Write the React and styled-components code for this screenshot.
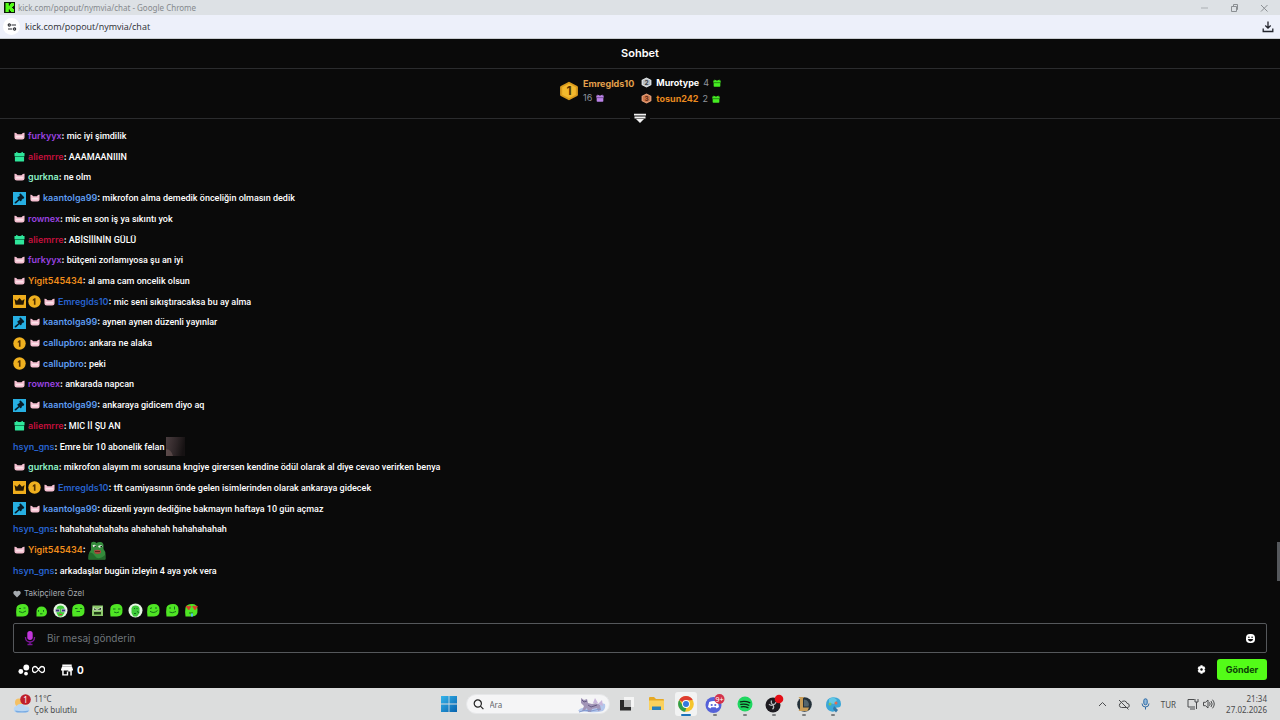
import React from "react";
import styled, { createGlobalStyle } from "styled-components";

const GlobalStyle = createGlobalStyle`
  *, *::before, *::after { box-sizing: border-box; }
  body { margin: 0; background: #0a0a0a; }
  button, input { font: inherit; color: inherit; }
  svg { display: block; flex: none; }
`;

const Page = styled.div`
  display: flex;
  flex-direction: column;
  min-height: 100vh;
  background: #0a0a0a;
  color: #fff;
  font-family: Inter, "Liberation Sans", sans-serif;
`;

const PlainButton = styled.button`
  display: flex;
  align-items: center;
  justify-content: center;
  gap: 2px;
  padding: 0;
  border: 0;
  background: none;
`;

/* ---------- browser window frame ---------- */

const TitleBar = styled.header`
  display: flex;
  align-items: center;
  height: 15px;
  padding: 0 10px 0 4px;
  gap: 3px;
  background: #dde1e5;
  color: #85898d;
  font: 8px/15px "Noto Sans", "Open Sans", sans-serif;
`;

const WindowControls = styled.div`
  display: flex;
  gap: 20px;
  margin-left: auto;
  color: #8b8f93;
`;

const AddressBar = styled.div`
  display: flex;
  align-items: center;
  justify-content: space-between;
  height: 24px;
  padding: 0 6px 0 3px;
  border-bottom: 1px solid #c9cdd0;
  background: #edf0fa;
  color: #2c2e33;
`;

const Address = styled.div`
  display: flex;
  align-items: center;
  gap: 5px;
  font: 9px/20px "Open Sans", "Noto Sans", sans-serif;
`;

const SiteInfo = styled(PlainButton)`
  width: 17px;
  height: 17px;
  border-radius: 50%;
  background: #fff;
`;

/* ---------- chat header and leaderboard ---------- */

const ChatTitle = styled.h1`
  margin: 0;
  height: 30px;
  border-bottom: 1px solid #2b2c2e;
  font-size: 11px;
  line-height: 29px;
  font-weight: 600;
  text-align: center;
`;

const Leaderboard = styled.section`
  display: flex;
  align-items: center;
  justify-content: center;
  gap: 7px;
  height: 43px;
  font-size: 9px;
`;

const Leader = styled.div`
  display: flex;
  align-items: center;
  gap: 4px;
`;

const RunnersUp = styled.div`
  display: flex;
  flex-direction: column;
  gap: 2px;
`;

const LeaderName = styled.div`
  color: ${(p) => p.$color};
  font-weight: 700;
  line-height: 14px;
`;

const GiftCount = styled.div`
  display: flex;
  align-items: center;
  gap: 4px;
  color: #8f959e;
  line-height: 13px;
`;

const Divider = styled.div`
  display: flex;
  align-items: center;
  gap: 4px;
  height: 12px;
  &::before, &::after {
    content: "";
    flex: 1;
    height: 1px;
    background: #2b2c2e;
  }
`;

/* ---------- messages ---------- */

const ChatArea = styled.main`
  position: relative;
  display: flex;
  flex: 1;
`;

const Messages = styled.ol`
  display: flex;
  flex: 1;
  flex-direction: column;
  justify-content: space-between;
  margin: 0;
  padding: 2px 13px 0;
  list-style: none;
`;

const Message = styled.li`
  display: flex;
  align-items: center;
  gap: 2px;
  height: 20px;
  font: 500 9px/20px Roboto, Inter, sans-serif;
`;

const Badge = styled.span`
  display: flex;
  align-items: center;
  justify-content: center;
  width: 13px;
  height: 13px;
`;

const Author = styled.span`
  color: ${(p) => p.$color};
  font-family: Inter, Roboto, sans-serif;
  font-weight: 600;
`;

const Thumb = styled.div`
  position: absolute;
  right: 0;
  bottom: 0;
  width: 3px;
  height: 39px;
  background: #55585c;
`;

/* ---------- composer ---------- */

const Composer = styled.footer`
  padding: 6px 13px 8px;
`;

const Restriction = styled.div`
  display: flex;
  align-items: center;
  gap: 3px;
  color: #a6abb0;
  font-size: 8px;
  line-height: 13px;
`;

const Emotes = styled.div`
  display: flex;
  justify-content: space-between;
  max-width: 184px;
  margin: 2px 0 5px 2px;
`;

const EmoteButton = styled(PlainButton)`
  width: 15px;
  height: 16px;
`;

const MessageBox = styled.div`
  display: flex;
  align-items: center;
  height: 30px;
  padding: 0 11px 0 10px;
  gap: 11px;
  border: 1px solid #55585b;
  border-radius: 2px;
`;

const MessageInput = styled.input`
  flex: 1;
  min-width: 0;
  padding: 0;
  border: 0;
  outline: 0;
  background: none;
  font-size: 10px;
  line-height: 20px;
  &::placeholder { color: #70767b; opacity: 1; }
`;

const Actions = styled.div`
  display: flex;
  align-items: center;
  gap: 16px;
  margin-top: 6px;
  padding-left: 5px;
  font-size: 10px;
  font-weight: 700;
`;

const Points = styled.span`
  padding-left: 2px;
`;

const SendGroup = styled.div`
  display: flex;
  align-items: center;
  gap: 11px;
  margin-left: auto;
`;

const SendButton = styled.button`
  min-width: 50px;
  height: 21px;
  padding: 0 7px;
  border: 0;
  border-radius: 3px;
  background: #53fc18;
  color: #0b3f06;
  font-size: 9px;
  font-weight: 700;
  line-height: 21px;
`;

/* ---------- desktop taskbar ---------- */

const Taskbar = styled.nav`
  display: grid;
  grid-template-columns: 1fr auto 1fr;
  align-items: center;
  height: 32px;
  padding: 0 13px;
  background: #dcdddd;
  color: #4a4b4c;
  font: 8px/11px "Noto Sans", "Open Sans", sans-serif;
`;

const Weather = styled.div`
  display: flex;
  align-items: center;
  gap: 2px;
`;

const Launcher = styled.div`
  display: flex;
  align-items: center;
  gap: 9px;
  padding-left: 5px;
`;

const Search = styled.label`
  display: flex;
  align-items: center;
  width: 144px;
  height: 20px;
  padding: 0 2px 0 6px;
  gap: 6px;
  border: 1px solid #e6e7e9;
  border-radius: 10px;
  background: #f5f5f6;
`;

const SearchInput = styled.input`
  flex: 1;
  min-width: 0;
  padding: 0;
  border: 0;
  outline: 0;
  background: none;
  &::placeholder { color: #65676a; opacity: 1; }
`;

const Apps = styled.div`
  display: flex;
  justify-content: space-between;
  width: 229px;
  margin-left: -3px;
`;

const AppButton = styled(PlainButton)`
  position: relative;
  width: 22px;
  height: 24px;
  border-radius: 3px;
  background: ${(p) => (p.$active ? "#f2f3f3" : "none")};
  &::after {
    content: "";
    display: ${(p) => (p.$running ? "block" : "none")};
    position: absolute;
    bottom: 0;
    width: ${(p) => (p.$active ? "10px" : "4px")};
    height: 2px;
    border-radius: 1px;
    background: ${(p) => (p.$active ? "#1c73b9" : "#7d7e80")};
  }
`;

const Tray = styled.div`
  display: flex;
  align-items: center;
  justify-content: flex-end;
  gap: 11px;
`;

const TrayPair = styled.div`
  display: flex;
  align-items: center;
  gap: 4px;
`;

const Clock = styled.time`
  text-align: right;
`;

/* ---------- drawings ---------- */

const KickLogo = () => (
  <svg width="11" height="11" viewBox="0 0 11 11">
    <path d="M0 0h11v11H0z" fill="#0b1a08" />
    <path d="M1.500 1h3.300v2.500H6V2h1V1h3v3H9v1H8v1h1v1h1v3H7V9H6V7.500H4.800V10H1.500z" fill="#53fc18" />
  </svg>
);

const TuneIcon = () => (
  <svg width="10" height="10" viewBox="0 0 10 10" fill="none" stroke="#2b2d31" strokeWidth="1.100">
    <circle cx="2.300" cy="3" r="1.100" /><path d="M4.500 3H9M1 7h4.300" /><circle cx="7.600" cy="7" r="1.100" />
  </svg>
);

const DownloadIcon = () => (
  <svg width="12" height="12" viewBox="0 0 12 12" fill="none" stroke="#22242c" strokeWidth="1.300">
    <path d="M6 .5v6.500M3.300 4.500 6 7.200 8.700 4.500M1.200 7.500v3h9.600v-3" />
  </svg>
);

const Gift = ({ size = 11, color = "#2be86a", band = "#0c7a35" }) => (
  <svg width={size} height={size} viewBox="0 0 12 12">
    <path d="M2.300.8 5 2.300h2L9.700.8v1.400H11.500v3.500H.5V2.200h1.800z" fill={color} />
    <path d="M1 6h10v4.500q0 1-1 1H2q-1 0-1-1z" fill={color} />
    <path d="M1 5.500h10v.7H1z" fill={band} />
  </svg>
);

const Hexagon = ({ size, place, fill, edge, ink }) => (
  <svg width={size} height={size} viewBox="0 0 22 22">
    <path d="M11 .8 20 5.500q.8.4.8 1.300v8.400q0 .9-.8 1.300L11 21.200 2 16.500q-.8-.4-.8-1.300V6.800q0-.9.8-1.300z" fill={edge} />
    <path d="M11 3 18.500 7v8L11 19 3.500 15V7z" fill={fill} />
    <text x="11" y="15.500" textAnchor="middle" fontSize="13" fontWeight="700" fill={ink}>{place}</text>
  </svg>
);

const CollapseIcon = () => (
  <svg width="12" height="11" viewBox="0 0 12 11" fill="#f2f2f2">
    <path d="M0 .8h12v1.600H0zM.5 3.400h11v2H.5zM2 6h8L6 10z" />
  </svg>
);

const PinkBadge = ({ size = 11 }) => (
  <svg width={size} height="8" viewBox="0 0 12 9" preserveAspectRatio="none">
    <path d="M.5.8Q2.200.5 3.800 2.400h4.400Q9.800.5 11.500.8v5.400Q11.500 8.300 9 8.300H3Q.5 8.300.5 6.200z" fill="#f4bfd0" />
    <path d="M2 5.300h8" stroke="#fbe3ea" strokeWidth="1.800" />
  </svg>
);

const ModBadge = () => (
  <svg width="13" height="13" viewBox="0 0 13 13">
    <path d="M0 0h13v13H0z" fill="#27afe2" />
    <path d="m6.400 2 1.200-.5 3.600 3.700-.3 1.300-1.200.2-1 1-.3 1.300-1 .3L4.300 6.100l.4-1.200 1.200-.3.900-.9zM5.700 6.900l1 1-3.800 3.700-1.300-.3.1-1z" fill="#071b26" />
  </svg>
);

const CrownBadge = () => (
  <svg width="13" height="13" viewBox="0 0 13 13">
    <path d="M0 0h13v13H0z" fill="#efad1c" />
    <path d="m1.500 4 2.500 1.800L6.500 3 9 5.800 11.500 4l-1 5.800h-8z" fill="#241804" />
  </svg>
);

const CoinBadge = () => (
  <svg width="13" height="13" viewBox="0 0 13 13">
    <circle cx="6.500" cy="6.500" r="6.200" fill="#efb01f" />
    <path d="M4.800 4.600 6.300 3.300h1.200v6.400H5.900V5.300l-1.100.8z" fill="#553200" />
  </svg>
);

const badgeArt = {
  pink: <PinkBadge />,
  small: <PinkBadge size={10} />,
  gift: <Gift color="#2fe69b" band="#0e7d52" />,
  mod: <ModBadge />,
  crown: <CrownBadge />,
  coin: <CoinBadge />,
};

const FrogEmote = () => (
  <svg width="18" height="19" viewBox="0 0 18 19">
    <path d="M3 3Q3 .5 6 .8 8 1 8.500 2.200 10 .5 13 1q2.500.5 2.500 3.500V8q2 2 2 6v4.500H.5Q0 12 3 9z" fill="#348c3c" />
    <path d="M1 12q3-2 6 3t10-1v4.500H.5z" fill="#226b2b" />
    <path d="M4.500 4.500Q6.500 3 8.500 5L5.500 6.200zM10 5q3-1.500 5 .5L11 6.800z" fill="#eaf6e6" />
    <path d="M6.500 4.800h1.500v1H6.500zM12.500 4.900h1.700v1.200h-1.700z" fill="#111" />
    <path d="M6 9.500Q9 8 13 9.500v2.500Q9 14 6.500 12z" fill="#a3493b" />
    <path d="M7 10.500h5" stroke="#5d211c" />
  </svg>
);

const BlurredEmote = () => (
  <svg width="19" height="19" viewBox="0 0 19 19">
    <defs>
      <linearGradient id="dusk" x2="1" y2=".2">
        <stop stopColor="#4a3d3f" /><stop offset=".6" stopColor="#2e2527" /><stop offset="1" stopColor="#161213" />
      </linearGradient>
    </defs>
    <path d="M0 0h19v19H0z" fill="url(#dusk)" />
    <path d="M0 12q5 0 7 7H0z" fill="#735d5c" opacity=".5" />
  </svg>
);

const Blob = ({ kind }) => {
  const green = "#4fe524";
  const dark = "#14701a";
  const heads = {
    round: <path d="M1.500 4.500Q2.500 1 8 1q5.500 0 5.500 5.500Q14 13.500 8 13.500H1.500Q.7 9 1.500 4.500z" fill={green} />,
    small: <path d="M2.500 8Q3 3.500 7.500 3.500T13 8.500Q13 13.500 8 13.500H2.500z" fill={green} />,
    square: <path d="M2.500 2.500H13V13H2V8z" fill="#8cc96a" />,
    white: <><circle cx="7.500" cy="7.500" r="7" fill="#e6f5e3" /><path d="M3.500 5.500q.5-3 4-3t4 3V10L9 13.500H5.500L3.500 10z" fill="#3fcb3a" /></>,
  };
  const faces = {
    smile: <path d="M4 5.500h2M8.500 5h2M4 8.500q3.500 2.500 7-.5" />,
    dots: <path d="M4.500 7v1.800M9.500 7v1.800M6 10.800h2.500" />,
    shades: <><path d="M2.500 6.200h4v2.600h-4zM8.500 6.200h4v2.600h-4z" fill="#3a3478" stroke="#dfd3ea" strokeWidth=".6" /><path d="M6 11.500h3" stroke="#d5333c" /></>,
    flat: <path d="M4 5.500h2.500M9 5.500h2.200M5.500 8.500H9" />,
    grin: <><path d="M4 9h7v2.500H4z" fill="#1d3a14" stroke="none" /><path d="m3.500 4.500 3.500 2L11.500 4v3.200h-8z" fill="#1d3a14" stroke="#eef8ea" strokeWidth=".7" /></>,
    wink: <path d="M4 6h2.500M9 6h2.500M5 9q2.500 1.500 5 0" />,
    point: <path d="M6 5.500h1M8.500 5.500h1M9 8.500l2 1M6 10.500h2" />,
    calm: <path d="M4 5.500 6 4.800M9 5h2M4 8.300Q8 11 11.500 7.500" />,
    think: <path d="M5 4v2M9.500 3.500v3M4.500 9q3 1.500 5 0l1.500-.5" />,
    hearts: <><path d="M2 3.500q1.500-1 2.500 0 1.500-1 2.500 0L4.800 7zM8.500 3.500q1.500-1 2.500 0 1.500-1 2.500 0L11 7z" fill="#e1352f" stroke="#e1352f" strokeWidth=".6" /><path d="M5 10h4" /><path d="M8 10.500v3" stroke="#50bde8" strokeWidth="2" /></>,
  };
  const [head, face] = kind.split("-");
  return (
    <svg width="15" height="15" viewBox="0 0 15 15" fill="none" stroke={dark} strokeWidth="1">
      <g stroke="none">{heads[head]}</g>
      {faces[face]}
    </svg>
  );
};

const HeartIcon = () => (
  <svg width="8" height="8" viewBox="0 0 8 8" fill="#a6abb0"><path d="M4 7.500.8 4.200Q-.3 2.500 1 1.200 2.600 0 4 1.500 5.400 0 7 1.200 8.300 2.500 7.200 4.200z" /></svg>
);

const PurpleMic = () => (
  <svg width="12" height="16" viewBox="0 0 12 16">
    <rect x="3.300" y="1" width="5.400" height="9" rx="2.700" fill="#c236dc" />
    <path d="M1.500 7v.8Q1.800 12 6 12t4.500-4.200V7M6 12v2.500M3.500 14.500h5" fill="none" stroke="#7d179b" strokeWidth="1.300" />
  </svg>
);

const SmileIcon = () => (
  <svg width="9" height="9" viewBox="0 0 9 9">
    <rect width="9" height="9" rx="3.800" fill="#fff" />
    <circle cx="2.900" cy="3.300" r=".8" fill="#111" /><circle cx="6.100" cy="3.300" r=".8" fill="#111" />
    <path d="M1.800 5h5.400Q6.800 7.400 4.500 7.400T1.800 5z" fill="#111" />
  </svg>
);

const BubblesIcon = () => (
  <svg width="12" height="12" viewBox="0 0 12 12" fill="#fff"><circle cx="8.300" cy="3.500" r="2.900" /><circle cx="2.800" cy="7.500" r="2.400" /><circle cx="8" cy="9.600" r="1.900" /></svg>
);

const InfinityIcon = () => (
  <svg width="13" height="9" viewBox="0 0 13 9" fill="none" stroke="#fff" strokeWidth="1.300">
    <path d="M6.500 4.500C5 2.200 4.500 1.500 3.200 1.500a2.800 3 0 0 0 0 6C4.500 7.500 5 6.800 6.500 4.500S8.500 1.500 9.800 1.500a2.800 3 0 0 1 0 6C8.500 7.500 8 6.800 6.500 4.500z" />
  </svg>
);

const StoreIcon = () => (
  <svg width="12" height="12" viewBox="0 0 12 12" fill="#fff">
    <path d="M1.300.5h9.400v1.400H1.300zM1.200 2.300h9.600l1.200 3.200v1H0v-1zM1.200 6.500h1.500v3.800h3.100V7.500h1.400v4h-6zM8.800 6.500h2v5h-1.500V7.500h-2v-1z" />
  </svg>
);

const GearIcon = () => (
  <svg width="9" height="9" viewBox="0 0 9 9"><path d="M3.500.3h2l.3 1.200 1.300-.3 1.300 2-.8.800v1l.8.8-1.300 2-1.300-.3-.3 1.200h-2l-.3-1.200-1.300.3-1.300-2 .8-.8V4L.6 3.200l1.300-2 1.300.3z" fill="#fff" /><circle cx="4.500" cy="4.500" r="1.200" fill="#0a0a0a" /></svg>
);

const WeatherIcon = () => (
  <svg width="19" height="20" viewBox="0 0 19 20">
    <circle cx="6" cy="8.500" r="4" fill="#f4c064" />
    <path d="M3.500 18.500a3.300 3.300 0 0 1 0-6.500Q5 9.500 8 10q3-.5 4 2.200 4.500-.2 4.500 3.300 0 3-3.500 3z" fill="#b9d6f3" />
    <path d="M2 16.500q7 1.500 14 0-1 2-3.500 2h-8q-2 0-2.500-2z" fill="#79abe2" />
    <circle cx="12.500" cy="5.500" r="5.300" fill="#bf1e2c" />
    <text x="12.500" y="8.500" textAnchor="middle" fontSize="8" fill="#fff">1</text>
  </svg>
);

const WindowsIcon = () => (
  <svg width="16" height="16" viewBox="0 0 16 16">
    <defs><linearGradient id="win" x2="1" y2="1"><stop stopColor="#35b4ea" /><stop offset="1" stopColor="#0762ae" /></linearGradient></defs>
    <path d="M0 0h7.600v7.600H0zM8.400 0H16v7.600H8.400zM0 8.400h7.600V16H0zM8.400 8.400H16V16H8.400z" fill="url(#win)" />
  </svg>
);

const SearchIcon = () => (
  <svg width="11" height="11" viewBox="0 0 11 11" fill="none" stroke="#222" strokeWidth="1.200"><circle cx="4.800" cy="4.500" r="3.600" /><path d="m7.400 7.100 3 3" /></svg>
);

const SearchArt = () => (
  <svg width="30" height="17" viewBox="0 0 30 17">
    <path d="M1 15q3-4 8-3l7-2q7-4 12-2 1 4-2 7-6 2-15 1z" fill="#b4c7ec" />
    <path d="M4 2l3 2 3-1 1 4 4 1q5-2 8 1l1 5-3 1-1-3-5 1-1 3h-3l-1-4-3 3H5l2-5-3-3z" fill="#a295b7" />
    <path d="m5 4 2 2 3-1M11 9l3 2 6-2" fill="none" stroke="#655b83" />
    <path d="m16 7 2-5 3 5zM21 8l4-4 1 6z" fill="#c9b5db" />
    <path d="M2 16q6-3 12-1l9-2" fill="none" stroke="#8299cf" />
  </svg>
);

const TaskViewIcon = () => (
  <svg width="16" height="16" viewBox="0 0 16 16"><path d="M5 1h10v10H5z" fill="#f5f5f5" /><path d="M1 4h4v7h7v3.500H1z" fill="#29292a" /><path d="M5 4h7v7H5z" fill="#b9babb" /></svg>
);

const FolderIcon = () => (
  <svg width="17" height="16" viewBox="0 0 17 16"><path d="M1 2q0-1 1-1h4l2 2h7q1 0 1 1v9q0 1-1 1H2q-1 0-1-1z" fill="#e6a925" /><path d="M1 4.500h15V13q0 1-1 1H2q-1 0-1-1z" fill="#fad15e" /><path d="M4 10.500h9V14H4z" fill="#2a80bc" /></svg>
);

const ChromeIcon = () => (
  <svg width="16" height="16" viewBox="0 0 16 16">
    <circle cx="8" cy="8" r="7.800" fill="#f5c52b" />
    <path d="M8 8 1.200 4.100A7.800 7.800 0 0 1 14.800 4.100L8 4.500z" fill="#de3c30" />
    <path d="M1.200 4.100 5 10l3.300 1.800-1.200 4A7.800 7.800 0 0 1 1.200 4.100z" fill="#2d9e4c" />
    <circle cx="8" cy="8" r="3.900" fill="#fff" /><circle cx="8" cy="8" r="3" fill="#3379df" />
  </svg>
);

const DiscordIcon = () => (
  <svg width="20" height="20" viewBox="0 0 20 20">
    <circle cx="8.500" cy="11" r="8" fill="#5562d8" />
    <path d="M4.200 8Q8.500 6 12.800 8l1.200 5-2.400 1.500-1-1.200H6.400l-1 1.200L3 13z" fill="#fff" />
    <circle cx="6.700" cy="11" r="1.100" fill="#5562d8" /><circle cx="10.300" cy="11" r="1.100" fill="#5562d8" />
    <circle cx="14.500" cy="5" r="5" fill="#d4324a" />
    <text x="14.500" y="7.500" textAnchor="middle" fontSize="7" fill="#fff">9+</text>
  </svg>
);

const SpotifyIcon = () => (
  <svg width="16" height="16" viewBox="0 0 16 16"><circle cx="8" cy="8" r="7.500" fill="#1fd760" /><path d="M3.300 5.800q5-1.300 9.400.9M3.800 8.400q4.500-1 8 .9M4.300 10.800q3.500-.8 6.600.8" fill="none" stroke="#0c2414" strokeWidth="1.300" strokeLinecap="round" /></svg>
);

const ObsIcon = () => (
  <svg width="20" height="20" viewBox="0 0 20 20"><circle cx="9" cy="11" r="7.500" fill="#1d1b20" /><path d="M7.500 6.500q-1 3 1.500 4.200 2.500-.2 3-2.700M9 11q-2.500 1-4-.8M9.200 11.200q1.300 2.300-.7 4" fill="none" stroke="#b9b9bd" strokeWidth="1.200" /><circle cx="15" cy="5" r="4.300" fill="#e40e16" /></svg>
);

const LeagueIcon = () => (
  <svg width="16" height="17" viewBox="0 0 16 17"><circle cx="8.500" cy="8.500" r="7.300" fill="#24313a" /><path d="M8 3.500a5 5 0 0 1 4.500 7H8z" fill="#53646c" /><path d="M2.500 1H8l-1 1.500v9h6L11.500 15h-9L4 13V3z" fill="#c99d57" /></svg>
);

const PaintIcon = () => (
  <svg width="17" height="17" viewBox="0 0 17 17"><path d="M1 9Q1 2 8 1.200 16 1 16 8q0 4-4 3.500-2 .5-1 2.500-2 3-6 1-4-2-4-6z" fill="#3aa6d8" /><path d="M4 3 8 1l4 3-3 4-5-1z" fill="#64c7e4" /><circle cx="11" cy="7" r="1.500" fill="#e8694e" /><circle cx="5" cy="8" r="1.500" fill="#7fc35c" /><path d="m9 10 4 4-2 2.500L8 13z" fill="#3277a9" /></svg>
);

const line = { fill: "none", stroke: "#4b4c4e", strokeWidth: 1 };
const ChevronIcon = () => <svg width="9" height="9" viewBox="0 0 9 9" {...line}><path d="m1 6 3.500-3.500L8 6" /></svg>;
const CloudOffIcon = () => (
  <svg width="12" height="11" viewBox="0 0 12 11" {...line}><path d="M3.500 8.500A2.300 2.300 0 0 1 3 4Q4 1.500 6.500 2q2 .3 2.400 2.200Q11.500 4.500 11.300 7q-.3 1.500-2 1.500zM1 1l9.500 9.500" /></svg>
);
const TrayMic = () => (
  <svg width="9" height="12" viewBox="0 0 9 12" {...line} stroke="#2d6aa5"><rect x="2.800" y=".8" width="3.400" height="6" rx="1.700" fill="#8fb7da" /><path d="M1 5.500Q1 9 4.500 9T8 5.500M4.500 9v2.500" /></svg>
);
const NetworkIcon = () => (
  <svg width="12" height="12" viewBox="0 0 12 12" {...line}><path d="M7.500 1.500H1v7.500h7M3 11h5M8 1v3h3V1M9.500 4v7" /></svg>
);
const SpeakerIcon = () => (
  <svg width="12" height="12" viewBox="0 0 12 12" {...line}><path d="M.5 4.300h2L5 2v8L2.500 7.700h-2zM6.500 4.300q1.300 1.700 0 3.400M8 3q2.300 3 0 6M9.500 1.700q3.500 4.300 0 8.600" /></svg>
);

/* ---------- data ---------- */

const colors = {
  furkyyx: "#9a43e0", rownex: "#9a43e0", aliemrre: "#c2103c", gurkna: "#90f3c8",
  kaantolga99: "#5d9bf0", callupbro: "#5d9bf0", Yigit545434: "#f08d1b",
  Emreglds10: "#2763cf", hsyn_gns: "#2763cf",
};

const messages = [
  [["pink"], "furkyyx", "mic iyi şimdilik"],
  [["gift"], "aliemrre", "AAAMAANIIIN"],
  [["pink"], "gurkna", "ne olm"],
  [["mod", "small"], "kaantolga99", "mikrofon alma demedik önceliğin olmasın dedik"],
  [["pink"], "rownex", "mic en son iş ya sıkıntı yok"],
  [["gift"], "aliemrre", "ABİSİİİNİN GÜLÜ"],
  [["pink"], "furkyyx", "bütçeni zorlamıyosa şu an iyi"],
  [["pink"], "Yigit545434", "al ama cam oncelik olsun"],
  [["crown", "coin", "pink"], "Emreglds10", "mic seni sıkıştıracaksa bu ay alma"],
  [["mod", "small"], "kaantolga99", "aynen aynen düzenli yayınlar"],
  [["coin", "small"], "callupbro", "ankara ne alaka"],
  [["coin", "small"], "callupbro", "peki"],
  [["pink"], "rownex", "ankarada napcan"],
  [["mod", "small"], "kaantolga99", "ankaraya gidicem diyo aq"],
  [["gift"], "aliemrre", "MIC İİ ŞU AN"],
  [[], "hsyn_gns", "Emre bir 10 abonelik felan", <BlurredEmote key="e" />],
  [["pink"], "gurkna", "mikrofon alayım mı sorusuna kngiye girersen kendine ödül olarak al diye cevao verirken benya"],
  [["crown", "coin", "pink"], "Emreglds10", "tft camiyasının önde gelen isimlerinden olarak ankaraya gidecek"],
  [["mod", "small"], "kaantolga99", "düzenli yayın dediğine bakmayın haftaya 10 gün açmaz"],
  [[], "hsyn_gns", "hahahahahahaha ahahahah hahahahahah"],
  [["pink"], "Yigit545434", "", <FrogEmote key="e" />],
  [[], "hsyn_gns", "arkadaşlar bugün izleyin 4 aya yok vera"],
];

const emotes = [
  "round-smile", "small-dots", "white-shades", "round-flat", "square-grin",
  "round-wink", "white-point", "round-calm", "round-think", "round-hearts",
];

const apps = [
  ["Görev görünümü", <TaskViewIcon />],
  ["Dosya Gezgini", <FolderIcon />],
  ["Chrome", <ChromeIcon />, true, true],
  ["Discord", <DiscordIcon />, true],
  ["Spotify", <SpotifyIcon />, true],
  ["OBS", <ObsIcon />, true],
  ["League of Legends", <LeagueIcon />, true],
  ["Paint", <PaintIcon />, true],
];

export default function App() {
  return (
    <Page>
      <GlobalStyle />
      <TitleBar>
        <KickLogo />
        <span>kick.com/popout/nymvia/chat - Google Chrome</span>
        <WindowControls>
          <PlainButton aria-label="Simge durumuna küçült"><svg width="10" height="10" viewBox="0 0 10 10" stroke="currentColor"><path d="M1 5h7" opacity=".6" /></svg></PlainButton>
          <PlainButton aria-label="Geri yükle"><svg width="10" height="10" viewBox="0 0 10 10" fill="none" stroke="currentColor"><path d="M1.500 3.500h5v5h-5zM3.500 3.500v-2h4v5h-1" /></svg></PlainButton>
          <PlainButton aria-label="Kapat"><svg width="10" height="10" viewBox="0 0 10 10" stroke="currentColor"><path d="m1 2 6.500 6.500M7.500 2 1 8.500" /></svg></PlainButton>
        </WindowControls>
      </TitleBar>
      <AddressBar>
        <Address>
          <SiteInfo aria-label="Site bilgileri"><TuneIcon /></SiteInfo>
          <span>kick.com/popout/nymvia/chat</span>
        </Address>
        <PlainButton aria-label="İndirilenler"><DownloadIcon /></PlainButton>
      </AddressBar>

      <ChatTitle>Sohbet</ChatTitle>
      <Leaderboard>
        <Leader>
          <Hexagon size={20} place="1" fill="#f3b92d" edge="#d99a1c" ink="#553300" />
          <div>
            <LeaderName $color="#e3a04c">Emreglds10</LeaderName>
            <GiftCount>16 <Gift size={8} color="#bb83e8" band="#69418c" /></GiftCount>
          </div>
        </Leader>
        <RunnersUp>
          <Leader>
            <Hexagon size={11} place="2" fill="#b9bfc4" edge="#e2e5e8" ink="#3c4146" />
            <LeaderName $color="#fff">Murotype</LeaderName>
            <GiftCount>4 <Gift size={8} color="#45ec22" band="#176e0c" /></GiftCount>
          </Leader>
          <Leader>
            <Hexagon size={11} place="3" fill="#cd7a4e" edge="#e6a17c" ink="#5b2811" />
            <LeaderName $color="#e9891f">tosun242</LeaderName>
            <GiftCount>2 <Gift size={8} color="#45ec22" band="#176e0c" /></GiftCount>
          </Leader>
        </RunnersUp>
      </Leaderboard>
      <Divider><PlainButton aria-label="Sıralamayı genişlet"><CollapseIcon /></PlainButton></Divider>

      <ChatArea>
        <Messages>
          {messages.map(([badges, author, text, emote], i) => (
            <Message key={i}>
              {badges.map((b) => <Badge key={b}>{badgeArt[b]}</Badge>)}
              <span><Author $color={colors[author]}>{author}</Author><Author $color="#fff">:</Author> {text}</span>
              {emote}
            </Message>
          ))}
        </Messages>
        <Thumb />
      </ChatArea>

      <Composer>
        <Restriction><HeartIcon />Takipçilere Özel</Restriction>
        <Emotes>
          {emotes.map((kind) => <EmoteButton key={kind} aria-label="İfade"><Blob kind={kind} /></EmoteButton>)}
        </Emotes>
        <MessageBox>
          <PurpleMic />
          <MessageInput aria-label="Mesaj" placeholder="Bir mesaj gönderin" />
          <PlainButton aria-label="İfade seç"><SmileIcon /></PlainButton>
        </MessageBox>
        <Actions>
          <PlainButton aria-label="Kanal puanları"><BubblesIcon /><InfinityIcon /></PlainButton>
          <PlainButton><StoreIcon /><Points>0</Points></PlainButton>
          <SendGroup>
            <PlainButton aria-label="Ayarlar"><GearIcon /></PlainButton>
            <SendButton>Gönder</SendButton>
          </SendGroup>
        </Actions>
      </Composer>

      <Taskbar>
        <Weather><WeatherIcon /><div>11°C<br />Çok bulutlu</div></Weather>
        <Launcher>
          <PlainButton aria-label="Başlat"><WindowsIcon /></PlainButton>
          <Search><SearchIcon /><SearchInput aria-label="Ara" placeholder="Ara" /><SearchArt /></Search>
          <Apps>
            {apps.map(([name, icon, running, active]) => (
              <AppButton key={name} aria-label={name} $running={running} $active={active}>{icon}</AppButton>
            ))}
          </Apps>
        </Launcher>
        <Tray>
          <ChevronIcon /><CloudOffIcon /><TrayMic />
          <span>TUR</span>
          <TrayPair><NetworkIcon /><SpeakerIcon /></TrayPair>
          <Clock>21:34<br />27.02.2026</Clock>
        </Tray>
      </Taskbar>
    </Page>
  );
}
